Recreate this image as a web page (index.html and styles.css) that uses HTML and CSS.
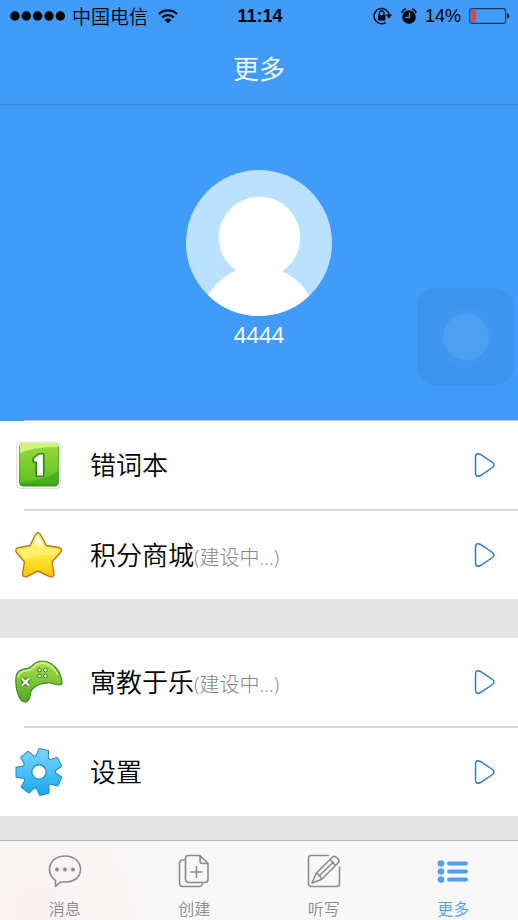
FILE: index.html
```html
<!DOCTYPE html>
<html lang="zh-CN">
<head>
<meta charset="utf-8">
<meta name="viewport" content="width=device-width, initial-scale=1">
<title>更多</title>
<link rel="stylesheet" href="styles.css">
</head>
<body>
<div class="app">
  <div class="status">
    <div class="status-left">
      <svg width="56" height="12" viewBox="0 0 56 12" aria-hidden="true"><circle cx="5" cy="6" r="4.7"/><circle cx="16.3" cy="6" r="4.7"/><circle cx="27.6" cy="6" r="4.7"/><circle cx="39" cy="6" r="4.7"/><circle cx="50.3" cy="6" r="4.7"/></svg>
      <span class="carrier">中国电信</span>
      <svg width="20" height="16" viewBox="0 0 20 16" aria-hidden="true"><g fill="none" stroke="#000" stroke-width="2.3"><path d="M1 6a13 13 0 0 1 18 0"/><path d="M4.2 9.4a8.3 8.3 0 0 1 11.6 0"/></g><path d="M10 15.2 6.6 11.9a4.8 4.8 0 0 1 6.8 0z"/></svg>
    </div>
    <time class="clock">11:14</time>
    <div class="status-right">
      <svg width="20" height="18" viewBox="0 0 20 18" aria-hidden="true"><path d="M12.6 15.6A7.6 7.6 0 1 1 16.2 8" fill="none" stroke="#000" stroke-width="1.4"/><path d="M12.6 7.5h6.6L16 11.4z"/><rect x="5" y="8" width="7.4" height="5.4" rx=".6"/><path d="M6.4 8V6.2a2.3 2.3 0 0 1 4.6 0V8" fill="none" stroke="#000" stroke-width="1.3"/></svg>
      <svg width="16" height="17" viewBox="0 0 16 17" aria-hidden="true"><circle cx="8" cy="9" r="6.8"/><path d="M.8 5A5.5 5.5 0 0 1 4.8 1M15.2 5A5.5 5.5 0 0 0 11.2 1" fill="none" stroke="#000" stroke-width="1.3"/><path d="M8.4 4.5v5H4.5" fill="none" stroke="#419bf9" stroke-width="1.4"/></svg>
      <span class="charge">14%</span>
      <svg width="41" height="16" viewBox="0 0 41 16" aria-hidden="true"><rect x=".6" y=".6" width="36" height="14.8" rx="2.5" fill="none" stroke="#12375f" stroke-width="1.1"/><rect x="2" y="2" width="5" height="12" fill="#ff3b30"/><path d="M38.3 5.3c2.5.8 2.5 4.6 0 5.4z"/></svg>
    </div>
  </div>
  <header class="navbar"><h1>更多</h1></header>

  <section class="profile">
    <svg class="avatar" viewBox="0 0 146 146" role="img" aria-label="头像">
      <defs><clipPath id="face"><circle cx="73" cy="73" r="73"/></clipPath></defs>
      <g clip-path="url(#face)"><path fill="#bce0ff" d="M0 0h146v146H0z"/><circle cx="73.5" cy="67.5" r="40.8" fill="#fff"/><circle cx="72.5" cy="154" r="58" fill="#fff"/></g>
    </svg>
    <p class="nickname">4444</p>
    <span class="touch"><span class="touch-dot"></span></span>
  </section>

  <main>
    <ul class="menu">
      <li><a class="row" href="#words">
        <svg class="icon" viewBox="0 0 48 48" aria-hidden="true">
          <defs><linearGradient id="g1" x2="0" y2="1"><stop stop-color="#9adb3e"/><stop offset="1" stop-color="#62bf22"/></linearGradient></defs>
          <rect x="1.5" y="1" width="44" height="46.5" rx="4" fill="#fafafa" stroke="#dfe1dd"/>
          <rect x="4" y="2" width="40" height="43.5" rx="4.5" fill="#3d9c17"/>
          <rect x="4.6" y="2" width="38.8" height="40.5" rx="4" fill="url(#g1)"/>
          <path d="M5 12V6q0-4 4-4h30q4 0 4 4-22-1-38 6z" fill="#d2f27e"/>
          <path d="M5 41q25-1 38-11v9q0 4-4 4H9q-3 0-4-2z" fill="#4cab1c"/>
          <path d="M19 17.5l5-4h4v21h-6V20.500H19z" fill="#fff" stroke="#2f8715" stroke-width="3.2" stroke-linejoin="round" paint-order="stroke"/>
        </svg>
        <span class="label">错词本</span>
        <svg class="arrow" viewBox="0 0 22 26" aria-hidden="true"><path d="M1.5 5.5Q1.5 0 6.5 2.5L18.5 10.5Q21.5 13 18.5 15.5L6.5 23.5Q1.5 26 1.5 20.5Z"/></svg>
      </a></li>
      <li><a class="row" href="#mall">
        <svg class="icon" viewBox="0 0 48 48" aria-hidden="true">
          <defs><linearGradient id="g2" x2="0" y2="1"><stop stop-color="#fff36b"/><stop offset=".55" stop-color="#ffe83c"/><stop offset="1" stop-color="#ffc400"/></linearGradient></defs>
          <path d="M20.5 3.5Q23 0 25.5 3.5L31.5 14.5 44 16.5Q48 18 45.5 21.5L37 31 39 43Q38.5 47 34.5 45.5L23 40 12 45.5Q7.5 47 7.5 42.5L9.5 31 1.5 21.5Q-.5 17.5 4 16.5L15 14.5Z" fill="url(#g2)" stroke="#b87924" stroke-width="1.4"/>
          <path d="M23 3.5 29.5 16.5 43.5 18.5 38 25Q22 22 9.500 28.500L3.500 19 16.500 16Z" fill="#fff99d" opacity=".45"/>
          <path d="M23 4l4.500 10q-3 3-5-2-4 3-3-1z" fill="#fff" opacity=".9"/>
        </svg>
        <span class="label">积分商城<small>(建设中...)</small></span>
        <svg class="arrow" viewBox="0 0 22 26" aria-hidden="true"><path d="M1.5 5.5Q1.5 0 6.5 2.5L18.5 10.5Q21.5 13 18.5 15.5L6.5 23.5Q1.5 26 1.5 20.5Z"/></svg>
      </a></li>
    </ul>
    <ul class="menu">
      <li><a class="row" href="#games">
        <svg class="icon" viewBox="0 0 48 48" aria-hidden="true">
          <defs><linearGradient id="g3" x2="0" y2="1"><stop stop-color="#b0e255"/><stop offset=".5" stop-color="#7cc634"/><stop offset="1" stop-color="#52a820"/></linearGradient></defs>
          <path d="M1 20C1 12 8 11 14 10 19 7 20 3 27 3 38 3 46 14 47 24 47 29 40 26 35 25 27 24 19 28 16 33 15 37 15 44 10 44 4 44 0 30 1 20Z" fill="url(#g3)" stroke="#3d8820" stroke-width="1.2"/>
          <path d="M3 20C3 14 9 13 15 12 20 9 21 5 27 5 34 5 40 11 43 17" fill="none" stroke="#d1f495" stroke-width="1.3"/>
          <path d="M7 20.5l7 7M14 20.5l-7 7" stroke="#317721" stroke-width="4.5"/><path d="M7 20.5l7 7M14 20.5l-7 7" stroke="#fff" stroke-width="2.4"/>
          <g fill="#eefbe6" stroke="#317721" stroke-width="1"><circle cx="24.5" cy="12" r="1.9"/><circle cx="30.5" cy="12" r="1.9"/><circle cx="24.5" cy="18" r="1.9"/><circle cx="30.5" cy="18" r="1.9"/></g>
        </svg>
        <span class="label">寓教于乐<small>(建设中...)</small></span>
        <svg class="arrow" viewBox="0 0 22 26" aria-hidden="true"><path d="M1.5 5.5Q1.5 0 6.5 2.5L18.5 10.5Q21.5 13 18.5 15.5L6.5 23.5Q1.5 26 1.5 20.5Z"/></svg>
      </a></li>
      <li><a class="row" href="#settings">
        <svg class="icon" viewBox="0 0 48 48" aria-hidden="true">
          <defs>
            <linearGradient id="g4" x2="0" y2="1"><stop stop-color="#7ad9fc"/><stop offset="1" stop-color="#16a6f2"/></linearGradient>
            <path id="tooth" d="M-6 -14-4.500 -22.500H4.500L6 -14Z"/>
            <g id="gear" transform="translate(24 24) rotate(12)"><circle r="16"/><use href="#tooth"/><use href="#tooth" transform="rotate(51.43)"/><use href="#tooth" transform="rotate(102.86)"/><use href="#tooth" transform="rotate(154.29)"/><use href="#tooth" transform="rotate(205.71)"/><use href="#tooth" transform="rotate(257.14)"/><use href="#tooth" transform="rotate(308.57)"/></g>
            <clipPath id="gear-clip"><circle cx="24" cy="24" r="16"/><path transform="translate(24 24) rotate(12)" d="M-6 -14-4.500 -22.500H4.500L6 -14Z"/><path transform="translate(24 24) rotate(63.43)" d="M-6 -14-4.500 -22.500H4.500L6 -14Z"/><path transform="translate(24 24) rotate(114.86)" d="M-6 -14-4.500 -22.500H4.500L6 -14Z"/><path transform="translate(24 24) rotate(166.29)" d="M-6 -14-4.500 -22.500H4.500L6 -14Z"/><path transform="translate(24 24) rotate(217.71)" d="M-6 -14-4.500 -22.500H4.500L6 -14Z"/><path transform="translate(24 24) rotate(269.14)" d="M-6 -14-4.500 -22.500H4.500L6 -14Z"/><path transform="translate(24 24) rotate(320.57)" d="M-6 -14-4.500 -22.500H4.500L6 -14Z"/></clipPath>
          </defs>
          <use href="#gear" fill="#2589bd" stroke="#2589bd" stroke-width="2" stroke-linejoin="round"/>
          <rect width="48" height="48" fill="url(#g4)" clip-path="url(#gear-clip)"/>
          <circle cx="24" cy="24" r="7.2" fill="#fff" stroke="#2c93c6" stroke-width="1.4"/>
        </svg>
        <span class="label">设置</span>
        <svg class="arrow" viewBox="0 0 22 26" aria-hidden="true"><path d="M1.5 5.5Q1.5 0 6.5 2.5L18.5 10.5Q21.5 13 18.5 15.5L6.5 23.5Q1.5 26 1.5 20.5Z"/></svg>
      </a></li>
    </ul>
  </main>

  <nav class="tabs">
    <a class="tab" href="#messages">
      <svg viewBox="0 0 34 34" aria-hidden="true"><path d="M7.5 26.5C3.5 23.5 1.5 20 1.5 15.5 1.5 7.5 8 2 17 2S32.5 7.5 32.5 15.5 26 28 17 28Q14.5 28 12.5 28L7.5 32.3Z"/><g fill="currentColor" stroke="none"><circle cx="9" cy="15.5" r="2"/><circle cx="17" cy="15.5" r="2"/><circle cx="25" cy="15.5" r="2"/></g></svg>
      <span>消息</span>
    </a>
    <a class="tab" href="#create">
      <svg viewBox="0 0 34 34" aria-hidden="true"><path d="M11.5 1.5H23L31 9.5V25Q31 28.5 27.5 28.5H12Q8.5 28.5 8.5 25V4.5Q8.5 1.5 11.5 1.5M23 1.5V7Q23 9.5 25.5 9.5H31M8.5 6H6Q2.500 6 2.5 9.5V29Q2.5 32.5 6 32.5H22Q25 32.5 25.5 29M19.5 12.5V23.5M14 18H25"/></svg>
      <span>创建</span>
    </a>
    <a class="tab" href="#dictation">
      <svg viewBox="0 0 34 34" aria-hidden="true"><path d="M21.5 1.5H4Q1.5 1.5 1.5 4V30Q1.5 32.5 4 32.5H30Q32.5 32.5 32.5 30V13M5 29 9 19.5 25.5 3Q27.5 1.5 29.5 3.5L31 5Q33 7 31 9L14.5 25.5ZM9 19.5Q13 20 14.5 25.5M23 5.5 28.5 11.5M12 22 26.5 8"/></svg>
      <span>听写</span>
    </a>
    <a class="tab active" href="#more" aria-current="page">
      <svg viewBox="0 0 34 34" aria-hidden="true"><g fill="currentColor" stroke="none"><circle cx="5" cy="9.5" r="3.3"/><circle cx="5" cy="17.5" r="3.3"/><circle cx="5" cy="25.5" r="3.3"/></g><path stroke-width="4" d="M13 9.5H30M13 17.5H30M13 25.5H30"/></svg>
      <span>更多</span>
    </a>
  </nav>
</div>
</body>
</html>
```
FILE: styles.css
```css
* { box-sizing: border-box; }

body {
  margin: 0;
  font-family: "Noto Sans CJK SC", sans-serif;
  font-weight: 350;
  color: #000;
}

h1, p, ul { margin: 0; padding: 0; }
ul { list-style: none; }
a { color: inherit; text-decoration: none; }
svg { display: block; flex: none; }

.app {
  display: flex;
  flex-direction: column;
  min-height: 100vh;
  background: #e4e4e4;
}

.status {
  display: grid;
  grid-template-columns: 1fr auto 1fr;
  align-items: center;
  height: 32px;
  padding: 0 8px 0 10px;
  background: #419bf9;
  line-height: 32px;
}

.status-left, .status-right { display: flex; align-items: center; }
.status-left { gap: 6px; }
.status-left svg:last-child { margin-left: 4px; }
.status-right { justify-content: flex-end; gap: 8px; }
.carrier { font-size: 19px; }
.clock { font: 700 18px/32px "Liberation Sans", sans-serif; }
.charge { font: 400 18px/32px "Liberation Sans", sans-serif; }

.navbar {
  height: 73px;
  border-bottom: 1px solid #3b7fcd;
  background: #419bf9;
  color: #fff;
  text-align: center;
}

.navbar h1 {
  font-size: 26px;
  font-weight: 350;
  line-height: 72px;
}

.profile {
  position: relative;
  padding-top: 65px;
  background: #419bf9;
  color: #fff;
}

.avatar { width: 146px; height: 146px; margin: 0 auto; }

.nickname {
  height: 104px;
  font-family: "Open Sans", sans-serif;
  font-size: 22px;
  font-weight: 400;
  line-height: 36px;
  text-align: center;
}

.profile::after, .menu li + li::before {
  content: "";
  display: block;
  height: 1px;
  margin-left: 24px;
  background: #c8c8cc;
}

.menu li + li::before { height: 2px; background: #dadadd; }

.touch {
  position: absolute;
  right: 4px;
  bottom: 36px;
  display: grid;
  place-items: center;
  width: 97px;
  height: 97px;
  border-radius: 20px;
  background: #3c94ee;
}

.touch-dot {
  width: 46px;
  height: 46px;
  border-radius: 50%;
  background: #4d9ff2;
  box-shadow: 0 0 0 1px #4297ee, 0 0 0 7px #4197f0, 0 0 0 13px #3e95ef;
}

.menu { background: #fff; }
.menu + .menu { margin-top: 39px; }

.row {
  display: flex;
  align-items: center;
  height: 88px;
  padding: 0 22px 0 15px;
}

.icon { width: 48px; height: 48px; }

.label {
  flex: 1;
  margin-left: 27px;
  padding-bottom: 2px;
  font-size: 26px;
  line-height: 38px;
}

.label small {
  color: #858585;
  font-family: "Open Sans", "Noto Sans CJK SC", sans-serif;
  font-size: 20px;
  font-weight: 300;
  line-height: 20px;
}

.arrow { width: 22px; height: 26px; fill: none; stroke: #3079bd; stroke-width: 1.5; }

.tabs {
  display: flex;
  height: 80px;
  margin-top: auto;
  border-top: 1px solid #b5b5b5;
  background: radial-gradient(circle at 8% 90%, #fbf2f2, #f8f8f8 28%);
  color: #8c8c8c;
}

.tab {
  flex: 1;
  display: flex;
  flex-direction: column;
  align-items: center;
  padding-top: 13px;
  font-size: 16px;
  line-height: 24px;
}

.tab svg {
  width: 34px;
  height: 34px;
  margin-bottom: 8px;
  fill: none;
  stroke: currentColor;
  stroke-width: 1.6;
  stroke-linecap: round;
  stroke-linejoin: round;
}

.tab.active { color: #519ffa; }
```
